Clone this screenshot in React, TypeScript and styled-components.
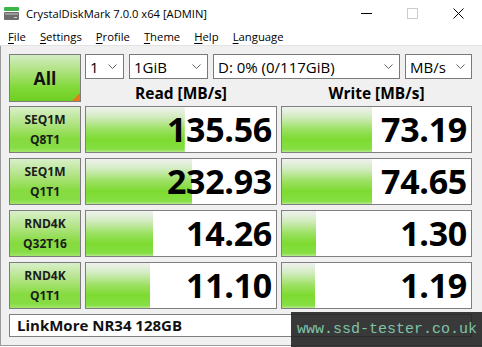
import * as React from "react";
import styled, { createGlobalStyle } from "styled-components";

const GlobalStyle = createGlobalStyle`
  html, body {
    margin: 0;
    padding: 0;
    background: #ffffff;
  }
  body {
    font-family: "Open Sans", "Noto Sans", sans-serif;
    color: #000;
    overflow: hidden;
  }
`;

const Window = styled.div`
  position: relative;
  width: 482px;
  height: 347px;
  display: flex;
  flex-direction: column;
  background: #fff;
  overflow: hidden;
`;

const TitleBar = styled.div`
  height: 27px;
  display: flex;
  align-items: center;
  padding-left: 4px;
  font-size: 11.2px;
`;

const Title = styled.span`
  margin-left: 6px;
  color: #000;
`;

const WindowControls = styled.div`
  margin-left: auto;
  display: flex;
  height: 100%;
  padding-right: 1px;
`;

const ControlButton = styled.div`
  width: 46px;
  display: flex;
  align-items: center;
  justify-content: center;
`;

const MenuBar = styled.div`
  height: 18px;
  display: flex;
  align-items: center;
  padding-left: 1px;
  border-bottom: 1px solid #e3e3e3;
  font-size: 11.3px;
`;

const MenuItem = styled.span`
  padding: 0 7px;
`;

const Key = styled.span`
  text-decoration: underline;
  text-underline-offset: 2px;
`;

const Content = styled.div`
  box-sizing: border-box;
  height: 300px;
  background: #f0f0f0;
  border-left: 1px solid #9a9a9a;
  border-bottom: 1px solid #9a9a9a;
  padding: 8px 0 0 8px;
  display: flex;
  flex-direction: column;
  gap: 4px;
`;

const Top = styled.div`
  display: flex;
  gap: 4px;
  height: 48px;
`;

const AllButton = styled.div`
  position: relative;
  box-sizing: border-box;
  width: 72px;
  height: 48px;
  border: 1px solid #7c7c7c;
  background: linear-gradient(
    to bottom,
    #d3edc2 0%,
    #aee27f 35%,
    #82d93a 70%,
    #6fcf22 100%
  );
  display: flex;
  align-items: center;
  justify-content: center;
  font-weight: 700;
  font-size: 17.5px;
  color: #111;

  &::after {
    content: "";
    position: absolute;
    right: 0;
    bottom: 0;
    border-style: solid;
    border-width: 0 0 8px 8px;
    border-color: transparent transparent #e8781e transparent;
  }
`;

const TopRight = styled.div`
  width: 387px;
  display: flex;
  flex-direction: column;
`;

const Controls = styled.div`
  display: flex;
  gap: 5px;
  height: 25px;
`;

const Combo = styled.div<{ $width: number }>`
  box-sizing: border-box;
  width: ${(p) => p.$width}px;
  height: 25px;
  border: 1px solid #7a7a7a;
  background: #fff;
  display: flex;
  align-items: center;
  padding: 0 6px 0 4px;
  font-size: 15px;
  white-space: nowrap;

  span {
    flex: 1;
  }
`;

const HeaderRow = styled.div`
  display: grid;
  grid-template-columns: 192px 191px;
  column-gap: 4px;
  padding-top: 4px;
`;

const Header = styled.div`
  text-align: center;
  font-weight: 700;
  font-size: 15.5px;
  line-height: 20px;
`;

const Rows = styled.div`
  display: flex;
  flex-direction: column;
  gap: 5px;
`;

const Row = styled.div`
  display: grid;
  grid-template-columns: 72px 192px 191px;
  column-gap: 4px;
  height: 47px;
`;

const TestLabel = styled.div`
  box-sizing: border-box;
  border: 1px solid #7c7c7c;
  background: linear-gradient(
    to bottom,
    #d8efc9 0%,
    #b3e487 35%,
    #86db3f 70%,
    #86dc44 90%,
    #a0e468 100%
  );
  display: flex;
  flex-direction: column;
  align-items: center;
  justify-content: center;
  font-weight: 700;
  font-size: 12px;
  line-height: 20px;
  color: #1c1c1c;
`;

const Bar = styled.div<{ $fill: number }>`
  box-sizing: border-box;
  border: 1px solid #7f7f7f;
  background-color: #fff;
  background-image: linear-gradient(
    to bottom,
    #f0f1ef 0%,
    #d2ecc0 22%,
    #9ee166 48%,
    #7ddb30 72%,
    #86df44 94%,
    #b4ea8c 100%
  );
  background-repeat: no-repeat;
  background-size: ${(p) => p.$fill}% 100%;
  text-align: right;
  padding-right: 4px;
  font-weight: 700;
  font-size: 34px;
  line-height: 45px;
  color: #000;
  letter-spacing: -0.3px;
`;

const Comment = styled.div`
  box-sizing: border-box;
  width: 463px;
  height: 23px;
  border: 1px solid #7f7f7f;
  background: #fff;
  padding-left: 7px;
  font-weight: 700;
  font-size: 15px;
  line-height: 21px;
  color: #111;
`;

const Watermark = styled.div`
  position: absolute;
  right: 0;
  bottom: 0;
  width: 191px;
  height: 35px;
  box-sizing: border-box;
  padding-left: 6px;
  background: rgba(36, 36, 36, 0.9);
  font-family: "Liberation Mono", "DejaVu Sans Mono", monospace;
  font-size: 15px;
  line-height: 35px;
  color: #7fc4a8;
  white-space: nowrap;
`;

const Chevron = () => (
  <svg width="9" height="5" viewBox="0 0 9 5">
    <polyline points="0.5,0.5 4.5,4.5 8.5,0.5" fill="none" stroke="#5f5f5f" strokeWidth="1" />
  </svg>
);

const AppIcon = () => (
  <svg width="16" height="16" viewBox="0 0 16 16">
    <rect x="0" y="1" width="15" height="4" rx="1" fill="#3cb44a" />
    <rect x="0" y="6" width="15" height="8" rx="1" fill="#6d6d6d" />
    <rect x="1" y="7" width="13" height="2" fill="#9a9a9a" />
    <rect x="10" y="11" width="3" height="1" fill="#cfcfcf" />
  </svg>
);

const results = [
  { l1: "SEQ1M", l2: "Q8T1", read: "135.56", rf: 52, write: "73.19", wf: 47.6 },
  { l1: "SEQ1M", l2: "Q1T1", read: "232.93", rf: 56, write: "74.65", wf: 47.8 },
  { l1: "RND4K", l2: "Q32T16", read: "14.26", rf: 35.3, write: "1.30", wf: 18 },
  { l1: "RND4K", l2: "Q1T1", read: "11.10", rf: 33.7, write: "1.19", wf: 17.5 },
];

const menu = [
  ["F", "ile"],
  ["S", "ettings"],
  ["P", "rofile"],
  ["T", "heme"],
  ["H", "elp"],
  ["L", "anguage"],
];

const App = () => {
  return (
    <Window>
      <GlobalStyle />
      <TitleBar>
        <AppIcon />
        <Title>CrystalDiskMark 7.0.0 x64 [ADMIN]</Title>
        <WindowControls>
          <ControlButton>
            <svg width="11" height="1" viewBox="0 0 11 1">
              <rect width="11" height="1" fill="#000" />
            </svg>
          </ControlButton>
          <ControlButton>
            <svg width="11" height="11" viewBox="0 0 11 11">
              <rect x="0.5" y="0.5" width="10" height="10" fill="none" stroke="#cccccc" />
            </svg>
          </ControlButton>
          <ControlButton>
            <svg width="11" height="11" viewBox="0 0 11 11">
              <path d="M0.5 0.5 L10.5 10.5 M10.5 0.5 L0.5 10.5" stroke="#000" strokeWidth="1" />
            </svg>
          </ControlButton>
        </WindowControls>
      </TitleBar>
      <MenuBar>
        {menu.map(([k, rest]) => (
          <MenuItem key={k}>
            <Key>{k}</Key>
            {rest}
          </MenuItem>
        ))}
      </MenuBar>
      <Content>
        <Top>
          <AllButton>All</AllButton>
          <TopRight>
            <Controls>
              <Combo $width={39}>
                <span>1</span>
                <Chevron />
              </Combo>
              <Combo $width={79}>
                <span>1GiB</span>
                <Chevron />
              </Combo>
              <Combo $width={187}>
                <span>D: 0% (0/117GiB)</span>
                <Chevron />
              </Combo>
              <Combo $width={67}>
                <span>MB/s</span>
                <Chevron />
              </Combo>
            </Controls>
            <HeaderRow>
              <Header>Read [MB/s]</Header>
              <Header>Write [MB/s]</Header>
            </HeaderRow>
          </TopRight>
        </Top>
        <Rows>
          {results.map((r) => (
            <Row key={r.l1 + r.l2}>
              <TestLabel>
                <div>{r.l1}</div>
                <div>{r.l2}</div>
              </TestLabel>
              <Bar $fill={r.rf}>{r.read}</Bar>
              <Bar $fill={r.wf}>{r.write}</Bar>
            </Row>
          ))}
          <Comment>LinkMore NR34 128GB</Comment>
        </Rows>
      </Content>
      <Watermark>www.ssd-tester.co.uk</Watermark>
    </Window>
  );
};

export default App;
